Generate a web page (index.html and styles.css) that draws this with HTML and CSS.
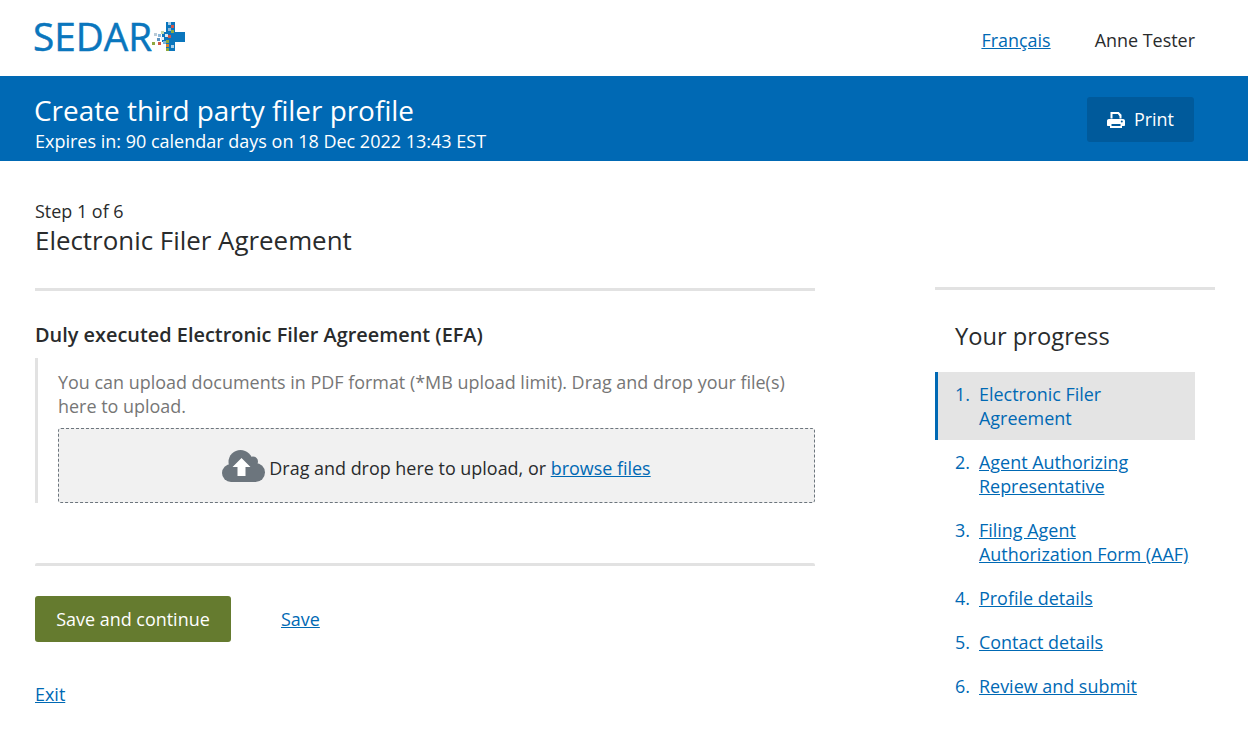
FILE: index.html
```html
<!DOCTYPE html>
<html lang="en">
<head>
<meta charset="utf-8">
<title>Create third party filer profile</title>
<link rel="stylesheet" href="styles.css">
</head>
<body>
<header class="topbar">
  <svg class="logo" width="158" height="58" viewBox="0 0 158 58" aria-label="SEDAR+">
    <text class="logo-text" x="3" y="33" textLength="119" lengthAdjust="spacingAndGlyphs">SEDAR</text>
    <g transform="translate(4 0)">
      <rect x="132" y="4" width="9" height="29" fill="#0a76bd"/>
      <rect x="128" y="14" width="23" height="10" fill="#0a76bd"/>
      <rect x="120" y="15" width="3" height="3" fill="#b9cbd8"/>
      <rect x="124" y="16" width="3" height="3" fill="#8fb9d9"/>
      <rect x="127" y="13" width="3" height="3" fill="#c4d6a8"/>
      <rect x="123" y="20" width="3" height="3" fill="#5b93bf"/>
      <rect x="127" y="19" width="3" height="3" fill="#e3eef6"/>
      <rect x="118" y="24" width="3" height="3" fill="#8fa83f"/>
      <rect x="124" y="24" width="3" height="3" fill="#d0574a"/>
      <rect x="129" y="23" width="3" height="3" fill="#7eb3d8"/>
      <rect x="132" y="22" width="3" height="3" fill="#8fa83f"/>
      <rect x="131" y="16" width="3" height="3" fill="#d9e8f3"/>
      <rect x="134" y="4" width="3" height="3" fill="#a9cde6"/>
      <rect x="137" y="7" width="3" height="3" fill="#d0574a"/>
      <rect x="134" y="10" width="3" height="3" fill="#8fb9d9"/>
      <rect x="137" y="12" width="3" height="3" fill="#8fa83f"/>
      <rect x="134" y="17" width="3" height="3" fill="#d0574a"/>
      <rect x="132" y="26" width="3" height="3" fill="#d9822b"/>
      <rect x="132" y="30" width="3" height="3" fill="#8fa83f"/>
      <rect x="137" y="27" width="3" height="3" fill="#a9cde6"/>
    </g>
  </svg>
  <nav class="topnav">
    <a href="#">Français</a>
    <span>Anne Tester</span>
  </nav>
</header>

<section class="banner">
  <div>
    <h1>Create third party filer profile</h1>
    <p>Expires in: 90 calendar days on 18 Dec 2022 13:43 EST</p>
  </div>
  <button class="print" type="button">
    <svg width="18" height="16" viewBox="0 0 18 16" aria-hidden="true">
      <path fill="#fff" d="M3.500 0h8.200l2.800 2.800v3.700h-2V4.200L10.900 2H5.500v4.500h-2zM1.800 7h14.400c.9 0 1.800.9 1.800 1.800v4.200c0 .6-.4 1-1 1h-2v2h-12v-2h-2c-.6 0-1-.4-1-1V8.800C0 7.900.9 7 1.800 7zM4.500 12v2h9v-2zM14.800 8.600a1 1 0 1 0 0 2 1 1 0 0 0 0-2z"/>
    </svg>
    <span class="print-label">Print</span>
  </button>
</section>

<main class="page">
  <div class="step">
    <p>Step 1 of 6</p>
    <h2>Electronic Filer Agreement</h2>
  </div>
  <div class="columns">
    <div class="content">
      <h3>Duly executed Electronic Filer Agreement (EFA)</h3>
      <div class="field">
        <p>You can upload documents in PDF format (*MB upload limit). Drag and drop your file(s) here to upload.</p>
        <div class="dropzone">
          <svg width="43" height="32" viewBox="0 0 43 32" aria-hidden="true">
            <g fill="#6c757d">
              <circle cx="9" cy="23" r="9"/>
              <circle cx="18.500" cy="12" r="12"/>
              <circle cx="31" cy="11.500" r="5"/>
              <circle cx="33.500" cy="22.500" r="9.500"/>
              <rect x="9" y="16" width="25" height="16"/>
            </g>
            <path fill="#fff" d="M19.500 8 28.500 17H23.500V26H15.500V17H10.500z"/>
          </svg>
          <span class="drop-label">Drag and drop here to upload, or <a href="#">browse files</a></span>
        </div>
      </div>
      <div class="actions">
        <button class="primary" type="button">Save and continue</button>
        <a href="#">Save</a>
      </div>
      <a class="exit" href="#">Exit</a>
    </div>
    <aside class="progress">
      <h2>Your progress</h2>
      <ol>
        <li class="current"><span class="num">1.</span><span class="item">Electronic Filer Agreement</span></li>
        <li><span class="num">2.</span><a class="item" href="#">Agent Authorizing Representative</a></li>
        <li><span class="num">3.</span><a class="item" href="#">Filing Agent Authorization Form (AAF)</a></li>
        <li><span class="num">4.</span><a class="item" href="#">Profile details</a></li>
        <li><span class="num">5.</span><a class="item" href="#">Contact details</a></li>
        <li><span class="num">6.</span><a class="item" href="#">Review and submit</a></li>
      </ol>
    </aside>
  </div>
</main>
</body>
</html>
```
FILE: styles.css
```css
* { box-sizing: border-box; }
html, body { margin: 0; padding: 0; }
body {
  font-family: "Open Sans", sans-serif;
  font-size: 17.96px;
  line-height: 24px;
  color: #292b2c;
  background: #fff;
  height: 742px;
  overflow: hidden;
}
a { color: #0069b4; }
p, h1, h2, h3, ol { margin: 0; padding: 0; font-weight: 400; }

.topbar {
  height: 76px;
  display: flex;
  justify-content: space-between;
  align-items: flex-start;
  padding: 18px 53px 0 30px;
}
.logo { display: block; overflow: visible; }
.logo-text {
  font-family: "Open Sans", sans-serif;
  font-size: 39px;
  fill: #0a76bd;
  stroke: #0a76bd;
  stroke-width: 0.5px;
}
.topnav { display: flex; gap: 44px; padding-top: 10px; }

.banner {
  height: 85px;
  background: #0069b4;
  color: #fff;
  display: flex;
  justify-content: space-between;
  align-items: flex-start;
  padding: 18px 54px 0 35px;
}
.banner h1 { font-size: 27.9px; line-height: 32px; margin-left: -1px; }
.banner p { font-size: 18px; line-height: 24px; margin-top: 3px; }
.print {
  width: 107px;
  height: 45px;
  margin-top: 3px;
  background: #005a9b;
  color: #fff;
  border: 0;
  border-radius: 3px;
  font: inherit;
  display: flex;
  align-items: center;
  justify-content: center;
  gap: 9px;
}
.print-label { margin-top: -2px; }

.page { padding: 38px 33px 0 35px; }
.step { height: 89px; }
.step p { line-height: 24px; }
.step h2 { font-size: 25.9px; line-height: 34px; }

.columns { display: flex; gap: 120px; align-items: flex-start; }
.content { width: 780px; border-top: 3px solid #e2e2e2; padding-top: 32px; }
.content h3 { font-size: 19.9px; line-height: 24px; font-weight: 600; }
.field {
  margin-top: 11px;
  border-left: 3px solid #e2e2e2;
  padding: 12px 0 0 20px;
  height: 145px;
  color: #767676;
}
.dropzone {
  height: 75px;
  margin-top: 10px;
  background: #f1f1f1;
  border: 1px dashed #6c757d;
  border-radius: 3px;
  display: flex;
  align-items: center;
  justify-content: center;
  gap: 4px;
  color: #292b2c;
}
.drop-label { padding-top: 4px; }
.actions {
  margin-top: 60px;
  border-top: 3px solid #e2e2e2;
  border-radius: 2px;
  padding-top: 30px;
  display: flex;
  align-items: center;
  gap: 50px;
}
.primary {
  width: 196px;
  height: 46px;
  background: #657b2f;
  color: #fff;
  border: 0;
  border-radius: 3px;
  font: inherit;
}
.exit { display: inline-block; margin-top: 40px; }

.progress { width: 280px; margin-top: -1px; border-top: 3px solid #e2e2e2; padding-top: 30px; }
.progress h2 { font-size: 23.7px; line-height: 32px; padding-left: 20px; }
.progress ol { list-style: none; margin-top: 20px; width: 260px; }
.progress li {
  display: flex;
  color: #0069b4;
  padding: 10px 0 10px 20px;
}
.progress li.current {
  background: #e4e4e4;
  border-left: 3px solid #0069b4;
  padding-left: 17px;
}
.num { flex: 0 0 24px; }
.item { width: 212px; }
```
